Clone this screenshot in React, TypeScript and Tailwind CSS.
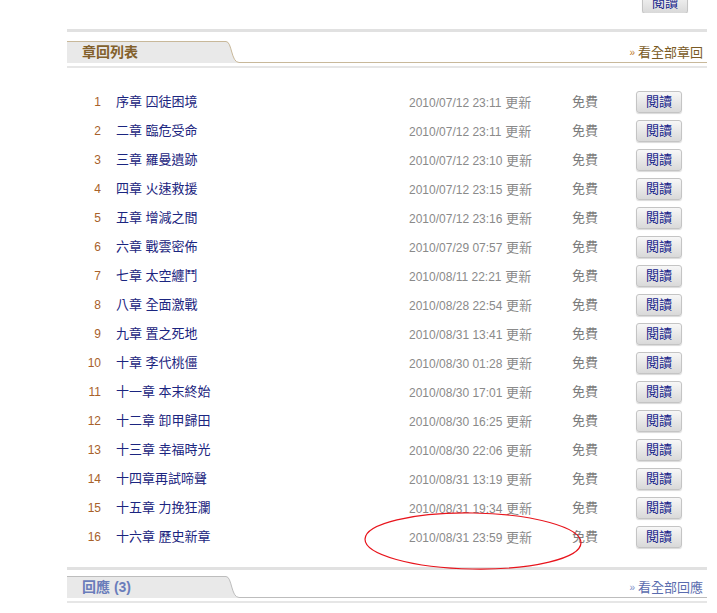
import React from 'react';

const chapters = [
  ['序章 囚徒困境', '2010/07/12 23:11'],
  ['二章 臨危受命', '2010/07/12 23:11'],
  ['三章 羅曼遺跡', '2010/07/12 23:10'],
  ['四章 火速救援', '2010/07/12 23:15'],
  ['五章 增減之間', '2010/07/12 23:16'],
  ['六章 戰雲密佈', '2010/07/29 07:57'],
  ['七章 太空纏鬥', '2010/08/11 22:21'],
  ['八章 全面激戰', '2010/08/28 22:54'],
  ['九章 置之死地', '2010/08/31 13:41'],
  ['十章 李代桃僵', '2010/08/30 01:28'],
  ['十一章 本末終始', '2010/08/30 17:01'],
  ['十二章 卸甲歸田', '2010/08/30 16:25'],
  ['十三章 幸福時光', '2010/08/30 22:06'],
  ['十四章再試啼聲', '2010/08/31 13:19'],
  ['十五章 力挽狂瀾', '2010/08/31 19:34'],
  ['十六章 歷史新章', '2010/08/31 23:59'],
];

const font = "font-['Liberation_Sans','Noto_Sans_CJK_TC',sans-serif]";

function ReadButton() {
  return (
    <button className="w-[46px] h-[22px] rounded-[3px] border border-[#c4c4c4] bg-gradient-to-b from-[#f7f7f7] to-[#d9d9d9] text-[13px] leading-none text-[#14228a] shadow-[0_1px_1px_rgba(0,0,0,0.15)]">
      閱讀
    </button>
  );
}

function TabHeader({ title, link, border, stroke, titleColor, linkColor, arrowColor }: {
  title: string;
  link: string;
  border: string;
  stroke: string;
  titleColor: string;
  linkColor: string;
  arrowColor: string;
}) {
  return (
    <div className="flex items-end h-[22px]">
      <div className={`h-[22px] w-[156px] shrink-0 bg-[#e9e9e9] border-t ${border} flex items-center pl-[15px]`}>
        <span className={`text-[14px] font-bold ${titleColor}`}>{title}</span>
      </div>
      <svg width="18" height="22" viewBox="0 0 18 22" className="shrink-0 block">
        <path d="M0 0.5 H3 C9 0.5 8 21.5 16 21.5 H18 V22 H0 Z" fill="#e9e9e9" />
        <path d="M0 0.5 H3 C9 0.5 8 21.5 16 21.5 H18" fill="none" stroke={stroke} strokeWidth="1" />
      </svg>
      <div className={`flex-1 h-[22px] border-b ${border} flex items-center justify-end pr-[4px] pt-[2px]`}>
        <span className={`text-[10px] mr-[3px] ${arrowColor}`}>»</span>
        <span className={`text-[13px] ${linkColor}`}>{link}</span>
      </div>
    </div>
  );
}

export default function App() {
  return (
    <div className={`w-[717px] h-[613px] bg-white overflow-hidden ${font}`}>
      <div className="ml-[67px] w-[640px] relative">
        {/* previous section's read button, cut off by the top edge */}
        <div className="h-[13px] overflow-hidden flex justify-end pr-[19px]">
          <div className="-mt-[10px]">
            <ReadButton />
          </div>
        </div>

        <div className="mt-[16px] h-[3px] bg-[#e1e1e1]" />

        <div className="mt-[9px]">
          <TabHeader
            title="章回列表"
            link="看全部章回"
            border="border-[#c8b89a]"
            stroke="#c8b89a"
            titleColor="text-[#83612c]"
            linkColor="text-[#7a5a24]"
            arrowColor="text-[#c07a2a]"
          />
        </div>
        <div className="mt-[3px] h-[2px] bg-[#e6e6e6]" />

        <div className="mt-[19px]">
          {chapters.map(([title, date], i) => (
            <div key={i} className="flex items-center h-[29px]">
              <span className="w-[34px] text-right text-[12px] text-[#a8612a]">{i + 1}</span>
              <span className="ml-[15px] w-[293px] text-[13px] text-[#1b2580]">{title}</span>
              <span className="w-[163px] text-[#8a8a8a]">
                <span className="text-[12px]">{date}</span>
                <span className="text-[13px]"> 更新</span>
              </span>
              <span className="w-[64px] text-[13px] text-[#7c7c7c]">免費</span>
              <ReadButton />
            </div>
          ))}
        </div>

        <div className="mt-[16px] h-[3px] bg-[#e1e1e1]" />

        <div className="mt-[6px]">
          <TabHeader
            title="回應 (3)"
            link="看全部回應"
            border="border-[#bdbdbd]"
            stroke="#bdbdbd"
            titleColor="text-[#6a7dbb]"
            linkColor="text-[#5a6cae]"
            arrowColor="text-[#7a8cc8]"
          />
        </div>
        <div className="mt-[3px] h-[2px] bg-[#e6e6e6]" />

        {/* red hand-drawn ellipse annotation */}
        <svg className="absolute left-[296px] top-[511px] pointer-events-none" width="222" height="60" viewBox="0 0 222 60">
          <ellipse cx="110" cy="30" rx="108" ry="28" fill="none" stroke="#e8141c" strokeWidth="1.2" transform="rotate(1 110 30)" />
        </svg>
      </div>
    </div>
  );
}
